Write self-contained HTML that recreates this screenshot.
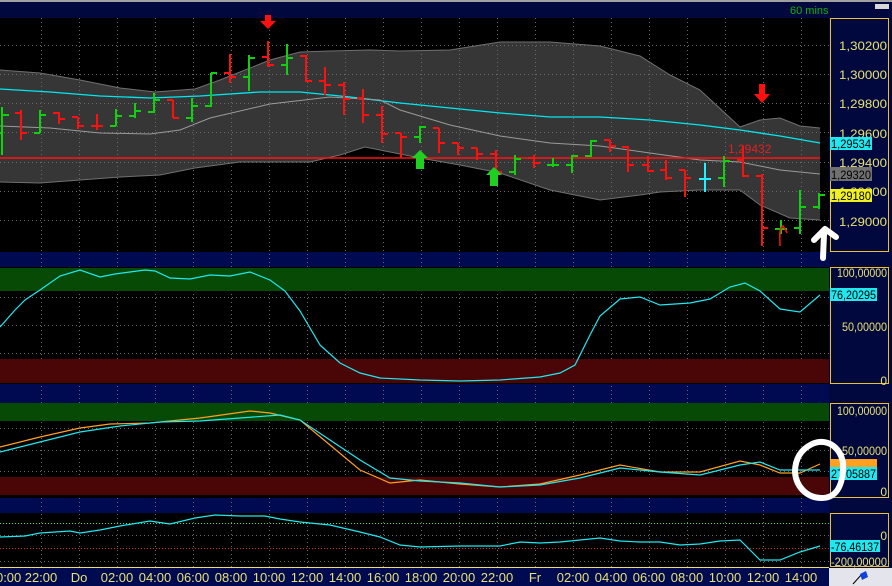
<!DOCTYPE html>
<html><head><meta charset="utf-8"><style>
html,body{margin:0;padding:0;background:#000;width:892px;height:586px;overflow:hidden}
svg{display:block}
text{font-family:"Liberation Sans",sans-serif}
</style></head><body>
<svg width="892" height="586" viewBox="0 0 892 586" xmlns="http://www.w3.org/2000/svg">
<rect width="892" height="586" fill="#000"/>
<rect x="0" y="0" width="892" height="2" fill="#a0a0a0"/>
<rect x="0" y="2" width="892" height="16" fill="#00083e"/>
<text x="790" y="14" font-size="11" fill="#10b010">60 mins</text>
<rect x="875" y="4" width="14" height="5" fill="#d8d8d8"/>
<rect x="829" y="18" width="63" height="568" fill="#00083e"/>
<rect x="0" y="252" width="829" height="15" fill="#000a50"/>
<rect x="0" y="384" width="829" height="19" fill="#000a50"/>
<rect x="0" y="498" width="829" height="15" fill="#000a50"/>
<rect x="0" y="567" width="892" height="19" fill="#000a50"/>
<line x1="0" y1="567.5" x2="829" y2="567.5" stroke="#f0e060" stroke-width="1"/>
<rect x="830.5" y="18.5" width="58" height="233" fill="none" stroke="#e8c030"/>
<rect x="830.5" y="267.5" width="58" height="116" fill="none" stroke="#e8c030"/>
<rect x="830.5" y="403.5" width="58" height="94" fill="none" stroke="#e8c030"/>
<rect x="830.5" y="513.5" width="58" height="53" fill="none" stroke="#e8c030"/>

<polygon fill="#363636" points="0,70 40,73 80,80 120,88 155,92 195,89 220,80 270,60 300,52 330,51 370,50 400,51 450,50 500,42 550,42 600,46 640,56 670,75 700,90 740,127 760,120 780,118 800,126 820,128 820,220 790,218 760,205 740,190 700,190 660,192 640,195 600,200 550,190 500,173 460,165 420,158 390,152 365,147 340,155 310,162 270,162 240,162 195,168 160,175 120,177 80,180 40,183 0,182"/>
<polyline fill="none" stroke="#707070" stroke-width="1" points="0,70 40,73 80,80 120,88 155,92 195,89 220,80 270,60 300,52 330,51 370,50 400,51 450,50 500,42 550,42 600,46 640,56 670,75 700,90 740,127 760,120 780,118 800,126 820,128"/>
<polyline fill="none" stroke="#707070" stroke-width="1" points="0,182 40,183 80,180 120,177 160,175 195,168 240,162 270,162 310,162 340,155 365,147 390,152 420,158 460,165 500,173 550,190 600,200 640,195 660,192 700,190 740,190 760,205 790,218 820,220"/>
<g stroke="#6a6a6a" stroke-width="1" stroke-dasharray="1,3">
<line x1="41.5" y1="18" x2="41.5" y2="567"/><line x1="79.5" y1="18" x2="79.5" y2="567"/><line x1="117.5" y1="18" x2="117.5" y2="567"/><line x1="155.5" y1="18" x2="155.5" y2="567"/><line x1="193.5" y1="18" x2="193.5" y2="567"/><line x1="231.5" y1="18" x2="231.5" y2="567"/><line x1="269.5" y1="18" x2="269.5" y2="567"/><line x1="307.5" y1="18" x2="307.5" y2="567"/><line x1="345.5" y1="18" x2="345.5" y2="567"/><line x1="383.5" y1="18" x2="383.5" y2="567"/><line x1="421.5" y1="18" x2="421.5" y2="567"/><line x1="459.5" y1="18" x2="459.5" y2="567"/><line x1="497.5" y1="18" x2="497.5" y2="567"/><line x1="535.5" y1="18" x2="535.5" y2="567"/><line x1="573.5" y1="18" x2="573.5" y2="567"/><line x1="611.5" y1="18" x2="611.5" y2="567"/><line x1="649.5" y1="18" x2="649.5" y2="567"/><line x1="687.5" y1="18" x2="687.5" y2="567"/><line x1="725.5" y1="18" x2="725.5" y2="567"/><line x1="763.5" y1="18" x2="763.5" y2="567"/><line x1="801.5" y1="18" x2="801.5" y2="567"/>
<line x1="0" y1="45.5" x2="829" y2="45.5"/><line x1="0" y1="74.5" x2="829" y2="74.5"/><line x1="0" y1="103.5" x2="829" y2="103.5"/><line x1="0" y1="132.5" x2="829" y2="132.5"/><line x1="0" y1="162.5" x2="829" y2="162.5"/><line x1="0" y1="191.5" x2="829" y2="191.5"/><line x1="0" y1="220.5" x2="829" y2="220.5"/>
<line x1="0" y1="297.5" x2="829" y2="297.5"/><line x1="0" y1="325.5" x2="829" y2="325.5"/><line x1="0" y1="353.5" x2="829" y2="353.5"/>
<line x1="0" y1="428.5" x2="829" y2="428.5"/><line x1="0" y1="450.5" x2="829" y2="450.5"/><line x1="0" y1="471.5" x2="829" y2="471.5"/>
<line x1="0" y1="535.5" x2="829" y2="535.5"/><line x1="0" y1="561.5" x2="829" y2="561.5"/>
</g>
<polyline fill="none" stroke="#00e8f0" stroke-width="1.3" points="0,89 50,92 100,96 150,98 200,96 260,92 300,92 350,97 400,103 450,108 500,113 550,117 600,117 650,120 700,125 740,130 780,136 820,143"/>
<polyline fill="none" stroke="#9a9a9a" stroke-width="1" points="0,126 50,128 100,133 150,134 180,130 210,118 270,104 330,97 380,100 400,110 450,125 500,136 550,143 600,146 650,153 700,160 740,162 780,170 820,174"/>
<line x1="0" y1="158" x2="820" y2="158" stroke="#ff1010" stroke-width="1.5"/>
<text x="728" y="153" font-size="12" fill="#e02020">1,29432</text>
<g stroke-width="2" fill="none">
<path stroke="#10d010" d="M2,107V155M0,133H2M2,115H9"/>
<path stroke="#ff1010" d="M21,110V140M15,113H21M21,133H27"/>
<path stroke="#10d010" d="M40,110V133M34,133H40M40,115H46"/>
<path stroke="#ff1010" d="M59,112V124M53,113H59M59,119H65"/>
<path stroke="#ff1010" d="M78,117V129M72,117H78M78,126H84"/>
<path stroke="#ff1010" d="M97,114V130M91,126H103"/>
<path stroke="#10d010" d="M116,109V126M110,126H116M116,116H122"/>
<path stroke="#10d010" d="M135,103V118M129,116H135M135,111H141"/>
<path stroke="#10d010" d="M154,93V113M148,112H154M154,100H160"/>
<path stroke="#ff1010" d="M173,100V118M167,100H173M173,118H179"/>
<path stroke="#10d010" d="M192,98V122M186,118H192M192,106H198"/>
<path stroke="#10d010" d="M211,73V107M205,106H211M211,73H217"/>
<path stroke="#ff1010" d="M230,54V83M224,73H230M230,77H236"/>
<path stroke="#10d010" d="M249,55V91M243,77H249M249,58H255"/>
<path stroke="#ff1010" d="M268,41V67M262,57H268M268,65H274"/>
<path stroke="#10d010" d="M287,44V75M281,65H287M287,58H293"/>
<path stroke="#ff1010" d="M306,55V82M300,56H306M306,81H312"/>
<path stroke="#ff1010" d="M325,67V95M319,81H325M325,85H331"/>
<path stroke="#ff1010" d="M344,82V115M338,85H344M344,99H350"/>
<path stroke="#ff1010" d="M363,89V123M357,98H363M363,115H369"/>
<path stroke="#ff1010" d="M382,106V143M376,115H382M382,134H388"/>
<path stroke="#ff1010" d="M401,133V158M395,133H401M401,137H407"/>
<path stroke="#10d010" d="M420,126V143M414,137H420M420,127H426"/>
<path stroke="#ff1010" d="M439,128V153M433,128H439M439,143H445"/>
<path stroke="#ff1010" d="M458,143V155M452,143H458M458,148H464"/>
<path stroke="#ff1010" d="M477,148V160M471,148H477M477,154H483"/>
<path stroke="#ff1010" d="M496,150V182M490,154H496M496,172H502"/>
<path stroke="#10d010" d="M515,155V175M509,172H515M515,159H521"/>
<path stroke="#ff1010" d="M534,155V168M528,158H534M534,163H540"/>
<path stroke="#10d010" d="M553,158V167M547,165H559"/>
<path stroke="#10d010" d="M572,155V173M566,165H572M572,156H578"/>
<path stroke="#10d010" d="M591,140V157M585,156H591M591,141H597"/>
<path stroke="#ff1010" d="M610,140V152M604,140H610M610,146H616"/>
<path stroke="#ff1010" d="M628,146V172M622,147H628M628,165H634"/>
<path stroke="#ff1010" d="M648,156V172M642,165H648M648,171H654"/>
<path stroke="#ff1010" d="M666,160V180M660,170H666M666,178H672"/>
<path stroke="#ff1010" d="M685,170V197M679,170H685M685,178H691"/>
<path stroke="#20f0ff" d="M705,163V192M699,179H711"/>
<path stroke="#10d010" d="M724,156V187M718,178H724M724,161H730"/>
<path stroke="#ff1010" d="M743,146V177M737,160H743M743,176H749"/>
<path stroke="#ff1010" d="M762,174V246M756,176H762M762,228H768"/>
<path stroke="#10d010" d="M781,220V234M775,229H787"/>
<path stroke="#10d010" d="M800,190V234M794,228H800M800,207H806"/>
<path stroke="#10d010" d="M819,193V209M813,207H819M819,195H825"/>
</g>
<polygon fill="#ff1010" points="265,15 271,15 271,21 276,21 268,29 260,21 265,21"/>
<polygon fill="#ff1010" points="759,84 765,84 765,94 770,94 762,103 754,94 759,94"/>
<polygon fill="#20d020" points="420,150 428,158 424,158 424,169 416,169 416,158 412,158"/>
<polygon fill="#20d020" points="494,167 502,175 498,175 498,186 490,186 490,175 486,175"/>
<path d="M780,246 C780,238 779,232 781,228 L783,226 C784,228 786,230 787,233" stroke="#ff1010" stroke-width="1.5" fill="none"/>
<path d="M823,258 L824,234 M814,240 L825,229 L836,237" stroke="#fff" stroke-width="6" fill="none" stroke-linecap="round" stroke-linejoin="round"/>

<rect x="0" y="268" width="829" height="23" fill="#064a06"/>
<rect x="0" y="359" width="829" height="24" fill="#4a0606"/>
<polyline fill="none" stroke="#20e8f0" stroke-width="1.2" points="0,327 15,310 25,300 40,290 60,276 80,270 100,277 115,274 145,270 155,271 170,278 190,279 210,275 230,276 250,272 270,280 285,291 300,311 320,345 340,363 360,373 380,378 420,380 460,381 500,380 540,377 560,373 575,365 590,335 600,316 620,299 640,297 660,305 690,303 710,299 730,287 745,283 760,291 780,309 800,312 820,295"/>
<rect x="0" y="403" width="829" height="18" fill="#064a06"/>
<rect x="0" y="477" width="829" height="18" fill="#4a0606"/>
<polyline fill="none" stroke="#ffa020" stroke-width="1.2" points="0,447 40,437 80,428 110,424 150,423 200,418 250,411 270,413 300,420 330,445 360,470 390,483 420,480 460,484 500,487 540,484 580,475 620,465 660,472 700,472 740,461 760,465 780,473 800,473 820,464"/>
<polyline fill="none" stroke="#20e8f0" stroke-width="1.2" points="0,452 40,442 80,432 120,426 160,422 200,421 240,418 280,415 300,420 330,440 360,460 390,478 420,481 460,483 500,487 540,485 580,478 620,468 660,472 700,475 740,465 760,462 780,470 800,470 820,470"/>
<line x1="0" y1="523.5" x2="829" y2="523.5" stroke="#40e040" stroke-dasharray="1,2"/>
<line x1="0" y1="548.5" x2="829" y2="548.5" stroke="#e02020" stroke-dasharray="1,2"/>
<polyline fill="none" stroke="#20e8f0" stroke-width="1.2" points="0,537 25,536 40,533 70,531 80,533 100,530 120,526 150,521 170,524 195,518 215,515 240,516 265,516 280,519 300,522 330,525 360,532 380,537 400,545 420,547 460,546 500,546 520,542 540,543 560,542 580,540 600,538 620,541 640,542 660,542 680,545 700,544 720,541 740,540 760,560 780,560 800,552 820,546"/>

<g font-size="12" fill="#e8e070" text-anchor="end">
<text x="887" y="50" textLength="48" lengthAdjust="spacingAndGlyphs">1,30200</text><text x="887" y="79" textLength="48" lengthAdjust="spacingAndGlyphs">1,30000</text><text x="887" y="108" textLength="48" lengthAdjust="spacingAndGlyphs">1,29800</text><text x="887" y="138" textLength="48" lengthAdjust="spacingAndGlyphs">1,29600</text><text x="887" y="167" textLength="48" lengthAdjust="spacingAndGlyphs">1,29400</text><text x="887" y="196" textLength="48" lengthAdjust="spacingAndGlyphs">1,29200</text><text x="887" y="226" textLength="48" lengthAdjust="spacingAndGlyphs">1,29000</text>
<text x="887" y="277" textLength="50" lengthAdjust="spacingAndGlyphs">100,00000</text><text x="887" y="331" textLength="45" lengthAdjust="spacingAndGlyphs">50,00000</text><text x="887" y="385">0</text>
<text x="887" y="415" textLength="50" lengthAdjust="spacingAndGlyphs">100,00000</text><text x="887" y="455" textLength="45" lengthAdjust="spacingAndGlyphs">50,00000</text><text x="887" y="496">0</text>
<text x="887" y="540">0</text><text x="887" y="566" textLength="56" lengthAdjust="spacingAndGlyphs">-200,00000</text>
</g>
<g font-size="12" fill="#000" lengthAdjust="spacingAndGlyphs">
<rect x="830" y="137" width="42" height="13" fill="#20e8f0"/><text x="831" y="148" textLength="40" lengthAdjust="spacingAndGlyphs">1,29534</text>
<rect x="830" y="167" width="42" height="14" fill="#707070"/><text x="831" y="179" textLength="40" lengthAdjust="spacingAndGlyphs">1,29320</text>
<rect x="830" y="189" width="42" height="13" fill="#f0f020"/><text x="831" y="200" textLength="40" lengthAdjust="spacingAndGlyphs">1,29180</text>
<rect x="830" y="288" width="47" height="13" fill="#20e8f0"/><text x="831" y="299" textLength="45" lengthAdjust="spacingAndGlyphs">76,20295</text>
<rect x="830" y="459" width="47" height="9" fill="#ffa020"/>
<rect x="830" y="467" width="47" height="13" fill="#20e8f0"/><text x="831" y="478" textLength="45" lengthAdjust="spacingAndGlyphs">27,05887</text>
<rect x="830" y="540" width="50" height="12" fill="#20e8f0"/><text x="831" y="551" textLength="48" lengthAdjust="spacingAndGlyphs">-76,46137</text>
</g>
<path d="M812,444 C830,436 845,452 843,470 C842,486 836,498 822,498 C806,498 796,486 795,472 C795,460 800,450 812,444" fill="none" stroke="#fff" stroke-width="6"/>

<g font-size="13" fill="#e8e070" text-anchor="middle">
<text x="5" y="582">20:00</text><text x="41" y="582">22:00</text><text x="79" y="582">Do</text><text x="117" y="582">02:00</text><text x="155" y="582">04:00</text><text x="193" y="582">06:00</text><text x="231" y="582">08:00</text><text x="269" y="582">10:00</text><text x="307" y="582">12:00</text><text x="345" y="582">14:00</text><text x="383" y="582">16:00</text><text x="421" y="582">18:00</text><text x="459" y="582">20:00</text><text x="497" y="582">22:00</text><text x="535" y="582">Fr</text><text x="573" y="582">02:00</text><text x="611" y="582">04:00</text><text x="649" y="582">06:00</text><text x="687" y="582">08:00</text><text x="725" y="582">10:00</text><text x="763" y="582">12:00</text><text x="801" y="582">14:00</text>
</g>
<rect x="829" y="568" width="63" height="18" fill="#e4e4ec"/>
<path d="M853,584 L862,574" stroke="#000" stroke-width="1"/>
<polygon points="860,574 866,571 868,577 862,580" fill="#1040e0"/>
</svg>
</body></html>
